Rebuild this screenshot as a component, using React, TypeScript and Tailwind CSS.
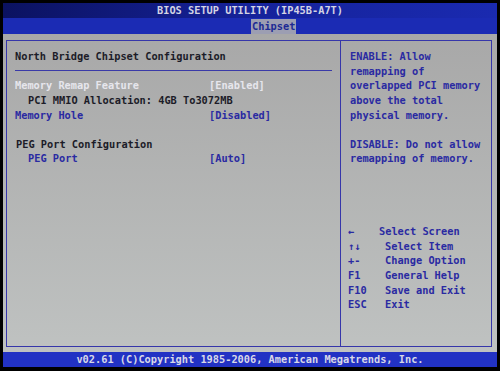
const mono = "font-['DejaVu_Sans_Mono',monospace]";

const keys = [
  { k: '←', d: 'Select Screen', shift: true },
  { k: '↑↓', d: 'Select Item' },
  { k: '+-', d: 'Change Option' },
  { k: 'F1', d: 'General Help' },
  { k: 'F10', d: 'Save and Exit' },
  { k: 'ESC', d: 'Exit' },
];

function Row({ children, className = '' }: { children?: React.ReactNode; className?: string }) {
  return <div className={`h-[14.6px] flex items-center whitespace-pre ${className}`}>{children}</div>;
}

export default function App() {
  return (
    <div className={`w-[500px] h-[371px] bg-black pl-[3px] pr-[3px] pt-[3px] pb-[4px] flex flex-col ${mono} text-[10.3px] font-bold leading-none`}>
      {/* title */}
      <div className="h-[15px] shrink-0 bg-gradient-to-r from-[#0b1260] via-[#15229a] to-[#1a2ab0] flex items-center justify-center text-[#d4d4e4]">
        BIOS SETUP UTILITY (IP45B-A7T)
      </div>

      {/* tab bar */}
      <div className="h-[16px] shrink-0 bg-[#1b2bb4] flex items-end pl-[248px]">
        <span className="h-[15px] flex items-center px-[1px] bg-[#9c9eb2] text-[#1c2a94]">Chipset</span>
      </div>

      {/* body */}
      <div className="flex-1 bg-gradient-to-b from-[#a8a8a8] to-[#bfc2c1] pl-[3px] pr-[5px] pt-[6px] pb-[5px]">
        <div className="h-full border border-[#3636aa] flex">
          {/* left */}
          <div className="w-[334px] border-r border-[#3636aa] pl-[8px] pr-[8px] pt-[8px] flex flex-col">
            <Row className="text-[#1c1c28]">North Bridge Chipset Configuration</Row>
            <Row>
              <div className="h-px w-full bg-[#3a3aa8]" />
            </Row>
            <Row className="text-[#e6e6ec]">
              <span className="w-[194px]">Memory Remap Feature</span>
              <span>[Enabled]</span>
            </Row>
            <Row className="text-[#1c1c28] pl-[13px]">PCI MMIO Allocation: 4GB To3072MB</Row>
            <Row className="text-[#2a2aa2]">
              <span className="w-[194px]">Memory Hole</span>
              <span>[Disabled]</span>
            </Row>
            <Row />
            <Row className="text-[#1c1c28] pl-[1px]">PEG Port Configuration</Row>
            <Row className="text-[#2a2aa2]">
              <span className="w-[194px] pl-[13px]">PEG Port</span>
              <span>[Auto]</span>
            </Row>
          </div>

          {/* right */}
          <div className="flex-1 pl-[9px] pt-[8px] flex flex-col text-[#2a2aa2]">
            <Row>ENABLE: Allow</Row>
            <Row>remapping of</Row>
            <Row>overlapped PCI memory</Row>
            <Row>above the total</Row>
            <Row>physical memory.</Row>
            <Row />
            <Row>DISABLE: Do not allow</Row>
            <Row>remapping of memory.</Row>
            <Row />
            <Row />
            <Row />
            <Row />
            {keys.map((r) => (
              <Row key={r.k} className="-ml-[2px]">
                <span className={r.shift ? 'w-[31px]' : 'w-[37px]'}>{r.k}</span>
                <span>{r.d}</span>
              </Row>
            ))}
          </div>
        </div>
      </div>

      {/* footer */}
      <div className="h-[15px] shrink-0 bg-[#2232c4] flex items-center justify-center text-[#d8d8e8]">
        v02.61 (C)Copyright 1985-2006, American Megatrends, Inc.
      </div>
    </div>
  );
}
